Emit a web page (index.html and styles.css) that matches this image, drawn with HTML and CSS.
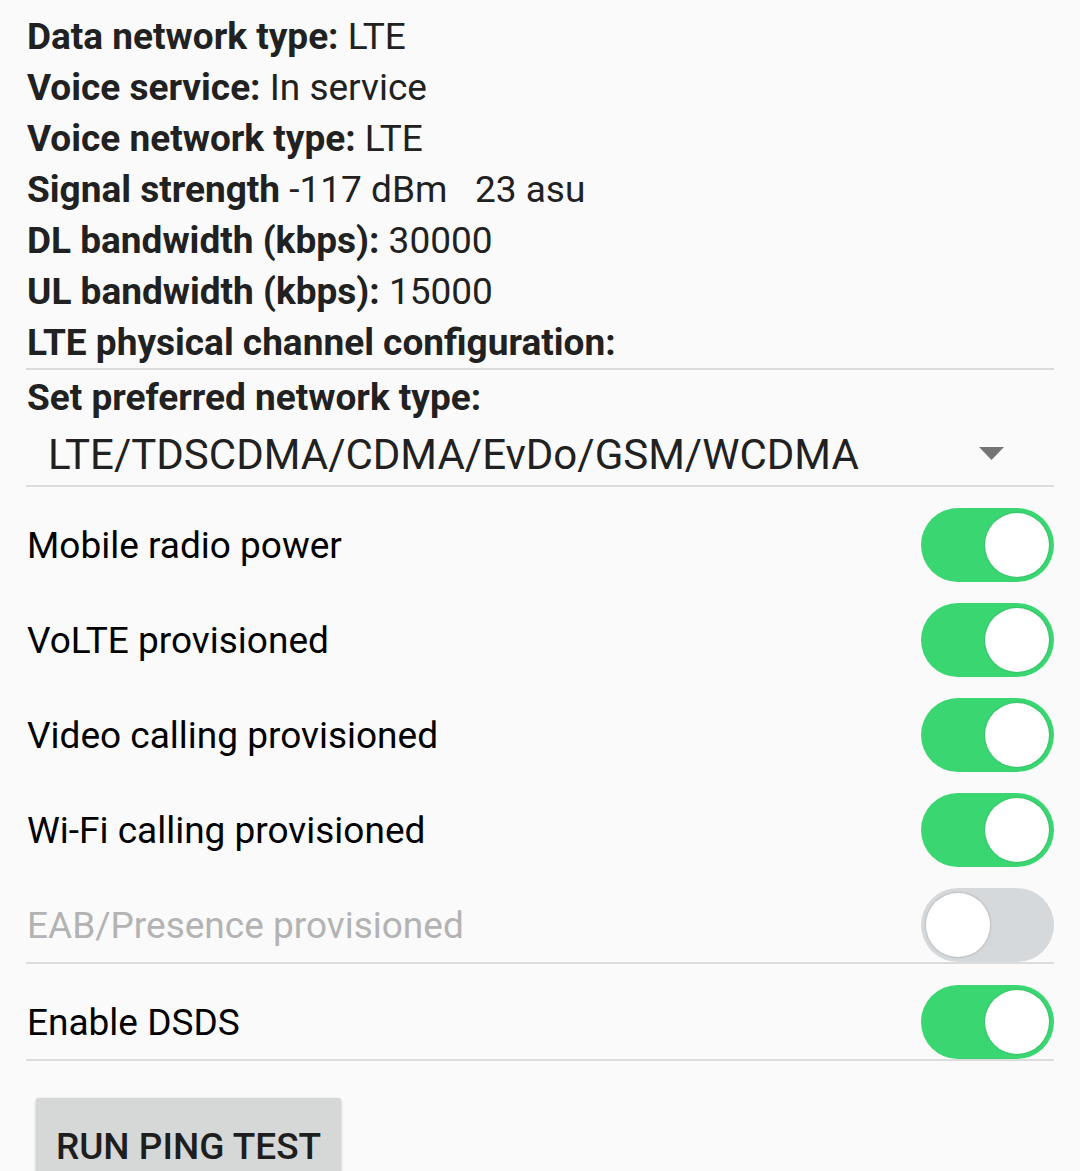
FILE: index.html
```html
<!DOCTYPE html>
<html>
<head>
<meta charset="utf-8">
<link rel="stylesheet" href="styles.css">
</head>
<body>
<div class="page">
  <div class="info">
    <div class="line"><b>Data network type:</b> LTE</div>
    <div class="line"><b>Voice service:</b> In service</div>
    <div class="line"><b>Voice network type:</b> LTE</div>
    <div class="line"><b>Signal strength</b> -117 dBm&nbsp;&nbsp;&nbsp;23 asu</div>
    <div class="line"><b>DL bandwidth (kbps):</b> 30000</div>
    <div class="line"><b>UL bandwidth (kbps):</b> 15000</div>
    <div class="line"><b>LTE physical channel configuration:</b></div>
  </div>
  <div class="divider"></div>
  <div class="line pref"><b>Set preferred network type:</b></div>
  <div class="spinner">
    <span class="spinner-text">LTE/TDSCDMA/CDMA/EvDo/GSM/WCDMA</span>
    <svg class="arrow" width="25" height="13" viewBox="0 0 25 13"><polygon points="0,0 25,0 12.5,13" fill="#757575"/></svg>
  </div>
  <div class="divider"></div>
  <div class="row"><span class="label">Mobile radio power</span><span class="switch on"><span class="thumb"></span></span></div>
  <div class="row"><span class="label">VoLTE provisioned</span><span class="switch on"><span class="thumb"></span></span></div>
  <div class="row"><span class="label">Video calling provisioned</span><span class="switch on"><span class="thumb"></span></span></div>
  <div class="row"><span class="label">Wi-Fi calling provisioned</span><span class="switch on"><span class="thumb"></span></span></div>
  <div class="row disabled"><span class="label">EAB/Presence provisioned</span><span class="switch off"><span class="thumb"></span></span></div>
  <div class="divider"></div>
  <div class="row"><span class="label">Enable DSDS</span><span class="switch on"><span class="thumb"></span></span></div>
  <div class="divider"></div>
  <div class="btn-wrap"><button class="btn">RUN PING TEST</button></div>
</div>
</body>
</html>
```
FILE: styles.css
```css
html, body {
  margin: 0;
  padding: 0;
  background: #fafafa;
  overflow: hidden;
}
body {
  font-family: Roboto, "Noto Sans", sans-serif;
  color: #212121;
}
.page {
  width: 1028px;
  margin-left: 26px;
  padding-top: 11px;
}
.line {
  font-size: 37px;
  line-height: 51px;
  padding-left: 1px;
  white-space: nowrap;
}
.line b {
  font-weight: 700;
}
.line.pref {
  margin-top: 2px;
}
.divider {
  height: 2px;
  background: #dcdcdc;
}
.spinner {
  height: 62px;
  display: flex;
  align-items: center;
  justify-content: space-between;
  padding-left: 22px;
  padding-right: 50px;
}
.spinner-text {
  font-size: 42px;
  color: #212121;
}
.arrow {
  display: block;
  margin-top: -2px;
}
.row {
  display: flex;
  align-items: center;
  justify-content: space-between;
  padding-top: 21px;
  height: 74px;
  padding-left: 1px;
}
.label {
  font-size: 37px;
  color: #000;
}
.row.disabled .label {
  color: #b3b3b3;
}
.switch {
  position: relative;
  width: 133px;
  height: 74px;
  border-radius: 37px;
  box-sizing: border-box;
  display: flex;
  align-items: center;
  padding: 0 5px;
}
.switch.on {
  background: #3ad672;
  justify-content: flex-end;
}
.switch.off {
  background: #d6d9dc;
  justify-content: flex-start;
}
.thumb {
  width: 64px;
  height: 64px;
  border-radius: 50%;
  background: #fff;
  box-shadow: 0 0 2px rgba(0,0,0,0.25);
}
.switch.off .thumb {
  box-shadow: 0 0 0 1px #c4c6c8, 0 0 3px rgba(0,0,0,0.2);
}
.btn-wrap {
  padding-top: 37px;
  padding-left: 10px;
}
.btn {
  font-family: Roboto, sans-serif;
  font-weight: 500;
  font-size: 37px;
  color: #1e1e1e;
  background: #d6d7d7;
  border: none;
  border-radius: 3px;
  width: 305px;
  height: 96px;
  padding: 0;
  box-shadow: 0 1px 3px rgba(0,0,0,0.25);
}
```
